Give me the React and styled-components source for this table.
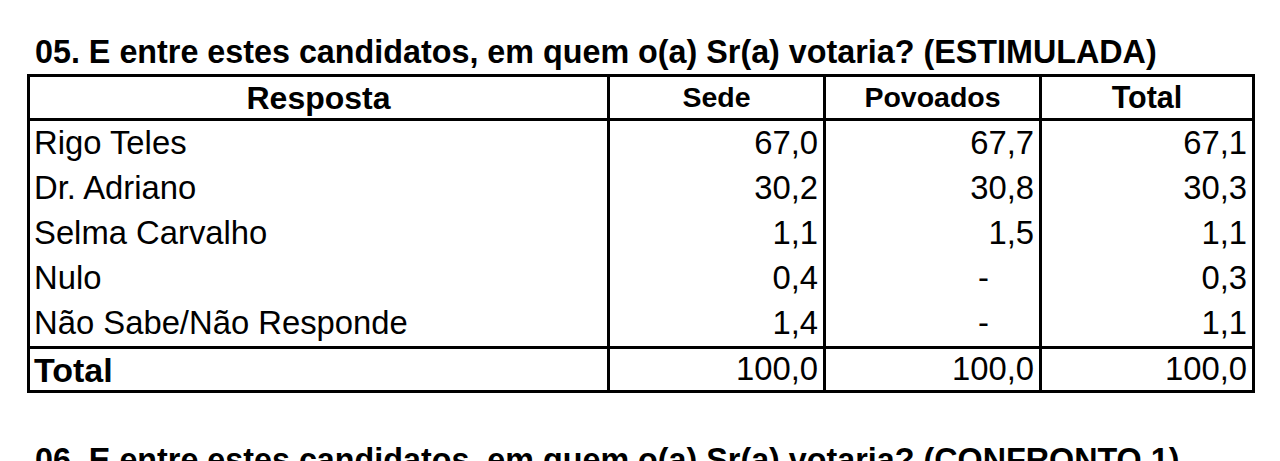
import React from 'react';
import styled, { createGlobalStyle } from 'styled-components';

const GlobalStyle = createGlobalStyle`
  html, body {
    margin: 0;
    padding: 0;
    background: #fff;
  }

  body {
    font-family: "Liberation Sans", Arial, sans-serif;
    color: #000;
  }
`;

const Page = styled.div`
  padding: 34px 25px 0 27px;
  overflow: hidden;
  height: 461px;
  box-sizing: border-box;
`;

const Section = styled.section`
  margin-bottom: 49px;
`;

const Title = styled.h2`
  margin: 0 0 4px 8px;
  font-size: 32.3px;
  line-height: 36px;
  font-weight: 700;
  white-space: nowrap;
`;

const Table = styled.table`
  width: 1228px;
  table-layout: fixed;
  border-collapse: separate;
  border-spacing: 0;
  border: 3px solid #000;
  box-sizing: border-box;
`;

const HeadCell = styled.th`
  height: 41px;
  padding: 0;
  border-bottom: 3px solid #000;
  border-right: ${({ $last }) => ($last ? 'none' : '3px solid #000')};
  font-size: ${({ $size }) => $size || '28.5px'};
  font-weight: 700;
  text-align: center;
  vertical-align: middle;
  line-height: 1;
`;

const Cell = styled.td`
  height: ${({ $total }) => ($total ? '41px' : '45px')};
  padding: ${({ $num, $dash }) => ($dash ? '0 50px 0 0' : $num ? '0 5px 0 0' : '0 0 0 4px')};
  border-top: ${({ $total }) => ($total ? '3px solid #000' : 'none')};
  border-right: ${({ $last }) => ($last ? 'none' : '3px solid #000')};
  font-size: ${({ $bold }) => ($bold ? '34px' : '32.8px')};
  font-weight: ${({ $bold }) => ($bold ? 700 : 400)};
  text-align: ${({ $num }) => ($num ? 'right' : 'left')};
  vertical-align: middle;
  line-height: 1;
  white-space: nowrap;
`;

const rows = [
  ['Rigo Teles', '67,0', '67,7', '67,1'],
  ['Dr. Adriano', '30,2', '30,8', '30,3'],
  ['Selma Carvalho', '1,1', '1,5', '1,1'],
  ['Nulo', '0,4', '-', '0,3'],
  ['Não Sabe/Não Responde', '1,4', '-', '1,1'],
];

const ResultTable = ({ data, total }) => (
  <Table>
    <colgroup>
      <col style={{ width: 580 }} />
      <col style={{ width: 216 }} />
      <col style={{ width: 216 }} />
      <col style={{ width: 210 }} />
    </colgroup>
    <thead>
      <tr>
        <HeadCell $size="32px">Resposta</HeadCell>
        <HeadCell>Sede</HeadCell>
        <HeadCell>Povoados</HeadCell>
        <HeadCell $size="30.5px" $last>Total</HeadCell>
      </tr>
    </thead>
    <tbody>
      {data.map(([name, ...values]) => (
        <tr key={name}>
          <Cell>{name}</Cell>
          {values.map((v, i) => (
            <Cell key={i} $num $dash={v === '-'} $last={i === values.length - 1}>
              {v}
            </Cell>
          ))}
        </tr>
      ))}
      <tr>
        <Cell $total $bold>Total</Cell>
        {total.map((v, i) => (
          <Cell key={i} $total $num $last={i === total.length - 1}>
            {v}
          </Cell>
        ))}
      </tr>
    </tbody>
  </Table>
);

const App = () => (
  <>
    <GlobalStyle />
    <Page>
      <Section>
        <Title>05. E entre estes candidatos, em quem o(a) Sr(a) votaria? (ESTIMULADA)</Title>
        <ResultTable data={rows} total={['100,0', '100,0', '100,0']} />
      </Section>
      <Section>
        <Title>06. E entre estes candidatos, em quem o(a) Sr(a) votaria? (CONFRONTO 1)</Title>
      </Section>
    </Page>
  </>
);

export default App;
